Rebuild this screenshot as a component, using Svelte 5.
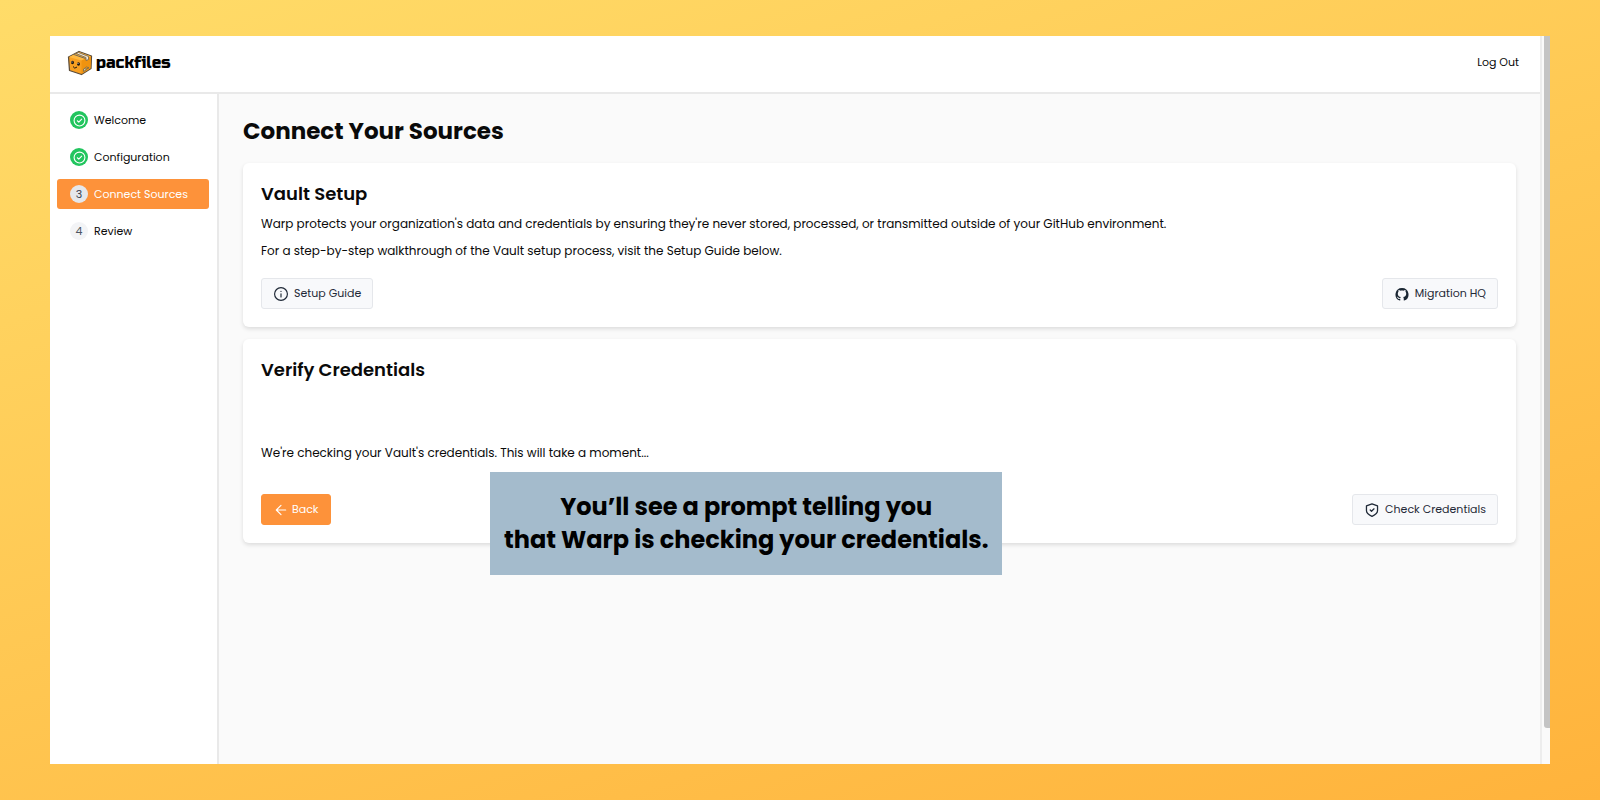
<script>
  const steps = [
    { label: 'Welcome', state: 'done' },
    { label: 'Configuration', state: 'done' },
    { label: 'Connect Sources', state: 'current' },
    { label: 'Review', state: 'todo' },
  ];
</script>

<div class="stage">
  <div class="window">
    <div class="app">
      <header>
        <a class="brand" href="#home">
          <svg class="box" viewBox="0 0 52 52" aria-hidden="true">
            <path d="M3 14 24 3 49 12 48 37 29 49 5 41Z" fill="#f9a021" stroke="#5b4c3a" stroke-width="2.500" stroke-linejoin="round" />
            <path d="M4 14 24 4 48 13 29 21Z" fill="#ffb941" />
            <path d="M29 21 48 13 47 37 29 48Z" fill="#f0930f" />
            <path d="M18 7 23 5 43 13V19L38 21V15Z" fill="#f3ead9" stroke="#6a5b48" stroke-width="1.500" />
            <path d="M14 9 37 17" fill="none" stroke="#6c655b" stroke-width="2" />
            <ellipse cx="11" cy="25" rx="3" ry="3.600" fill="#20170f" />
            <ellipse cx="23" cy="28" rx="3" ry="3.600" fill="#20170f" />
            <circle cx="10" cy="24" r="1" fill="#fff" />
            <circle cx="22" cy="27" r="1" fill="#fff" />
            <path d="M12 33Q15 39 20 34" fill="none" stroke="#20170f" stroke-width="2" />
            <path d="M33 38 38 35V40L33 43ZM39 39 44 34M39 33 44 37" fill="#d8c8a0" stroke="#8a7248" stroke-width="2" />
          </svg>
          <span>packfiles</span>
        </a>
        <button class="logout" type="button">Log Out</button>
      </header>
      <div class="body">
        <nav aria-label="Setup steps">
          {#each steps as step, i}
            <a class="step {step.state}" href="#step-{i + 1}">
              <span class="dot">
                {#if step.state === 'done'}
                  <svg viewBox="0 0 24 24" fill="none" stroke="#fff" stroke-width="2" stroke-linecap="round" stroke-linejoin="round" aria-hidden="true">
                    <circle cx="12" cy="12" r="10" />
                    <path d="m8 12.500 2.700 2.500 5.300-5.500" />
                  </svg>
                {:else}{i + 1}{/if}
              </span>
              {step.label}
            </a>
          {/each}
        </nav>
        <main>
          <h1>Connect Your Sources</h1>
          <section class="card">
            <h2>Vault Setup</h2>
            <p>Warp protects your organization's data and credentials by ensuring they're never stored, processed, or transmitted outside of your GitHub environment.</p>
            <p>For a step-by-step walkthrough of the Vault setup process, visit the Setup Guide below.</p>
            <div class="actions">
              <button type="button">
                <svg viewBox="0 0 24 24" fill="none" stroke="currentColor" stroke-width="2" stroke-linecap="round" aria-hidden="true">
                  <circle cx="12" cy="12" r="11" />
                  <path d="M12 11.500V17M12 7.500v.1" />
                </svg>
                Setup Guide
              </button>
              <button type="button">
                <svg viewBox="0 0 16 16" aria-hidden="true">
                  <path
                    fill="#1b2733"
                    d="M8 1a7.500 7.500 0 0 0-2.600 14.500c.4.1.6-.1.600-.5v-1.500c-1.700.4-2.600-.2-3.100-1.300-.2-.5-.5-.8-.9-1.100.9-.3 1.500.2 1.900.9.5.8 1.300.9 2.200.6.1-.5.300-.9.600-1.200C4.400 11.100 3.200 9.900 3.200 7.700c0-.9.3-1.600.8-2.200-.2-.7-.1-1.500.1-2.200.9 0 1.600.4 2.300.9 1-.3 2.200-.3 3.200 0 .7-.5 1.400-.9 2.300-.9.2.7.300 1.500.1 2.200.5.6.8 1.300.8 2.200 0 2.200-1.200 3.400-3.500 3.700.5.500.700 1.100.700 1.900V15c0 .4.2.6.600.5A7.500 7.500 0 0 0 8 1Z"
                  />
                </svg>
                Migration HQ
              </button>
            </div>
          </section>
          <section class="card">
            <h2>Verify Credentials</h2>
            <p class="status" role="status">We're checking your Vault's credentials. This will take a moment...</p>
            <div class="actions">
              <button class="primary" type="button">
                <svg viewBox="0 0 24 24" fill="none" stroke="currentColor" stroke-width="2" stroke-linecap="round" stroke-linejoin="round" aria-hidden="true">
                  <path d="M20 12H4m8-8-8 8 8 8" />
                </svg>
                Back
              </button>
              <button type="button">
                <svg viewBox="0 0 24 24" fill="none" stroke="currentColor" stroke-width="2.200" stroke-linecap="round" stroke-linejoin="round" aria-hidden="true">
                  <path d="M12 1.500 21.500 5v8c0 5-3.500 7.500-9.500 10-6-2.500-9.500-5-9.500-10V5Z" />
                  <path d="m9 12 2.200 2.200L15.500 10" />
                </svg>
                Check Credentials
              </button>
            </div>
          </section>
        </main>
      </div>
    </div>
    <div class="track"><div class="thumb"></div></div>
    <div class="caption">You’ll see a prompt telling you<br />that Warp is checking your credentials.</div>
  </div>
</div>

<style>
  :global(body) {
    margin: 0;
  }
  .stage {
    box-sizing: border-box;
    min-height: 100vh;
    display: flex;
    padding: 36px 50px;
    background: linear-gradient(162deg, #ffdc69, #ffb33c);
    font-family: Poppins, Inter, sans-serif;
    font-size: 12px;
    color: #0a0a0a;
  }
  .window {
    position: relative;
    flex: 1;
    display: flex;
    background: #fafafa;
  }
  .app {
    flex: 1;
    display: flex;
    flex-direction: column;
    border-right: 2px solid #ededed;
  }
  header {
    display: flex;
    align-items: center;
    justify-content: space-between;
    height: 56px;
    padding: 0 21px 0 17px;
    background: #fff;
    border-bottom: 2px solid #e9e9e9;
  }
  .brand {
    display: flex;
    align-items: center;
    gap: 3px;
    padding-bottom: 3px;
    color: #000;
    font-family: "Russo One", Poppins, Inter, sans-serif;
    font-size: 16px;
    line-height: 24px;
    font-weight: 400;
    font-variant-ligatures: none;
    text-decoration: none;
  }
  .box {
    width: 26px;
    height: 26px;
  }
  .logout {
    padding: 0 0 3px;
    border: 0;
    background: none;
    font: inherit;
    font-size: 11px;
    color: inherit;
  }
  .body {
    flex: 1;
    display: flex;
  }
  nav {
    box-sizing: border-box;
    width: 169px;
    flex: none;
    display: flex;
    flex-direction: column;
    gap: 7px;
    padding: 11px 8px 11px 7px;
    background: #fff;
    border-right: 2px solid #e9e9e9;
  }
  .step {
    display: flex;
    align-items: center;
    gap: 6px;
    height: 30px;
    padding: 0 12px 0 13px;
    border-radius: 3px;
    color: inherit;
    font-size: 11px;
    text-decoration: none;
    white-space: nowrap;
  }
  .dot {
    width: 18px;
    height: 18px;
    display: grid;
    place-items: center;
    border-radius: 50%;
    background: #f3f4f6;
    color: #4b5563;
  }
  .dot svg {
    width: 13px;
    height: 13px;
  }
  .done .dot {
    background: #22c55e;
  }
  .current {
    background: #fd923a;
    color: #fff;
  }
  .current .dot {
    background: #e5e7eb;
    color: #374151;
  }
  main {
    flex: 1;
    display: flex;
    flex-direction: column;
    gap: 12px;
    padding: 19px 24px 24px;
  }
  h1 {
    margin: 0 0 2px;
    font-size: 23px;
    line-height: 36px;
    font-weight: 700;
  }
  .card {
    padding: 18px;
    border-radius: 6px;
    background: #fff;
    box-shadow: 0 2px 4px rgb(0 0 0 / 12%);
  }
  h2 {
    margin: 0 0 8px;
    font-size: 18px;
    line-height: 26px;
    font-weight: 600;
  }
  p {
    margin: 0 0 9px;
    line-height: 18px;
  }
  .status {
    margin: 0;
    padding: 53px 0 23px;
  }
  .actions {
    display: flex;
    justify-content: space-between;
    padding-top: 9px;
  }
  .actions button {
    display: flex;
    align-items: center;
    gap: 6px;
    height: 31px;
    padding: 0 11px 0 12px;
    border: 1px solid #e5e7eb;
    border-radius: 3px;
    background: #f8f9fb;
    color: #1f2937;
    font: inherit;
    font-size: 11px;
  }
  .actions svg {
    width: 14px;
    height: 14px;
  }
  .actions .primary {
    gap: 4px;
    border-color: #fd923a;
    background: #fd923a;
    color: #fff;
  }
  .track {
    width: 8px;
    padding-left: 2px;
    box-sizing: border-box;
  }
  .thumb {
    height: 95%;
    border-radius: 0 0 0 3px;
    background: #c4c4c4;
  }
  .caption {
    position: absolute;
    left: 440px;
    top: 436px;
    padding: 18px 14px 19px;
    background: #a4bbcc;
    color: #000;
    font-size: 24px;
    line-height: 33px;
    font-weight: 700;
    text-align: center;
    white-space: nowrap;
  }
</style>
